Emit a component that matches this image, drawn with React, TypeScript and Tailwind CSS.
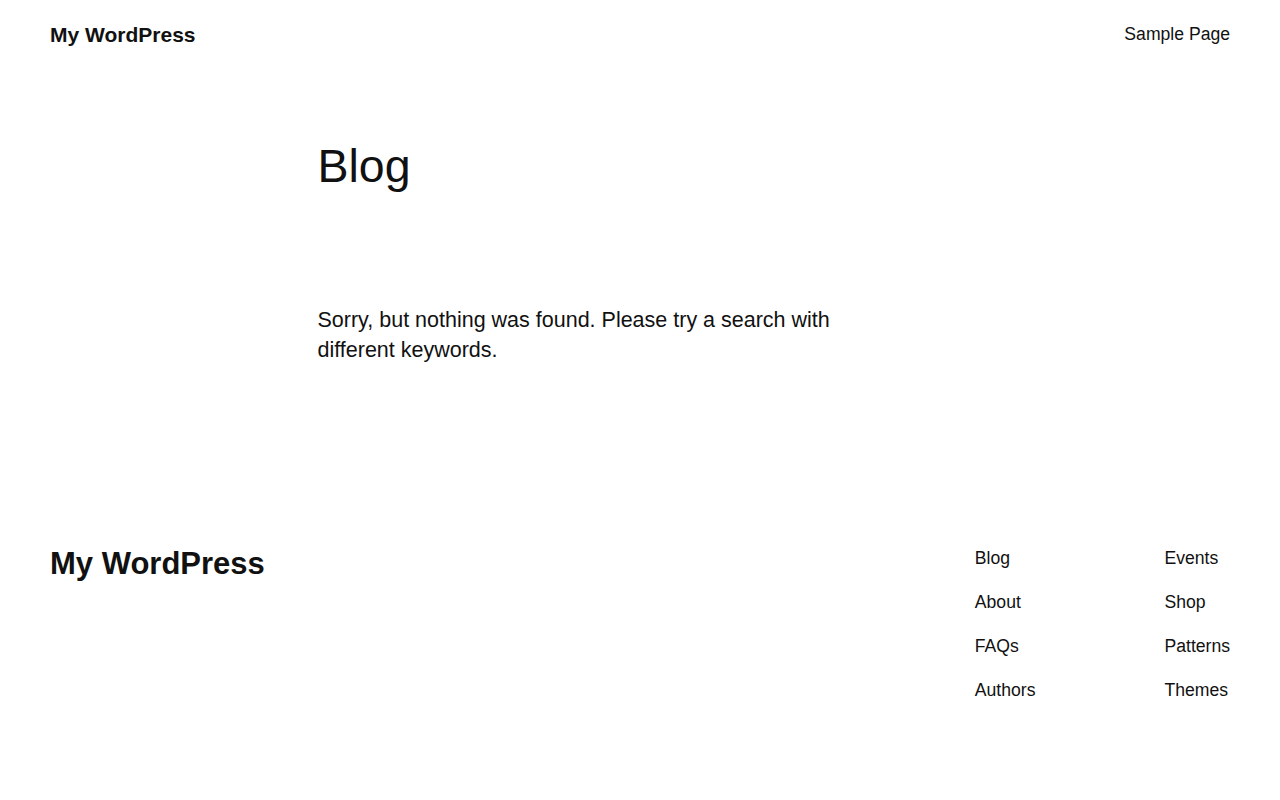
import React from 'react';

const footerCols: string[][] = [
  ['Blog', 'About', 'FAQs', 'Authors'],
  ['Events', 'Shop', 'Patterns', 'Themes'],
];

export default function App() {
  return (
    <div className="min-h-screen bg-white text-[#111111] font-['Liberation_Sans',Arial,sans-serif]">
      {/* Header */}
      <header className="flex items-start justify-between px-[50px] pt-[22px]">
        <a href="#" className="text-[21px] font-bold leading-[1.2]">
          My WordPress
        </a>
        <nav>
          <a href="#" className="block text-[17.6px] leading-[1.2] mt-[2px]">
            Sample Page
          </a>
        </nav>
      </header>

      {/* Main */}
      <main className="mx-auto w-[645px] pt-[92px]">
        <h1 className="text-[46.5px] font-normal leading-[1.2]">Blog</h1>
        <p className="mt-[110px] max-w-[560px] text-[21.5px] leading-[30px]">
          Sorry, but nothing was found. Please try a search with different keywords.
        </p>
      </main>

      {/* Footer */}
      <footer className="mt-[180px] flex items-start justify-between px-[50px] pb-[80px]">
        <a href="#" className="text-[31px] font-bold leading-[1.2]">
          My WordPress
        </a>
        <div className="flex gap-[129px]">
          {footerCols.map((col, i) => (
            <ul key={i} className="flex flex-col gap-[17.6px]">
              {col.map((item) => (
                <li key={item} className="text-[17.6px] leading-[1.5]">
                  <a href="#">{item}</a>
                </li>
              ))}
            </ul>
          ))}
        </div>
      </footer>
    </div>
  );
}
